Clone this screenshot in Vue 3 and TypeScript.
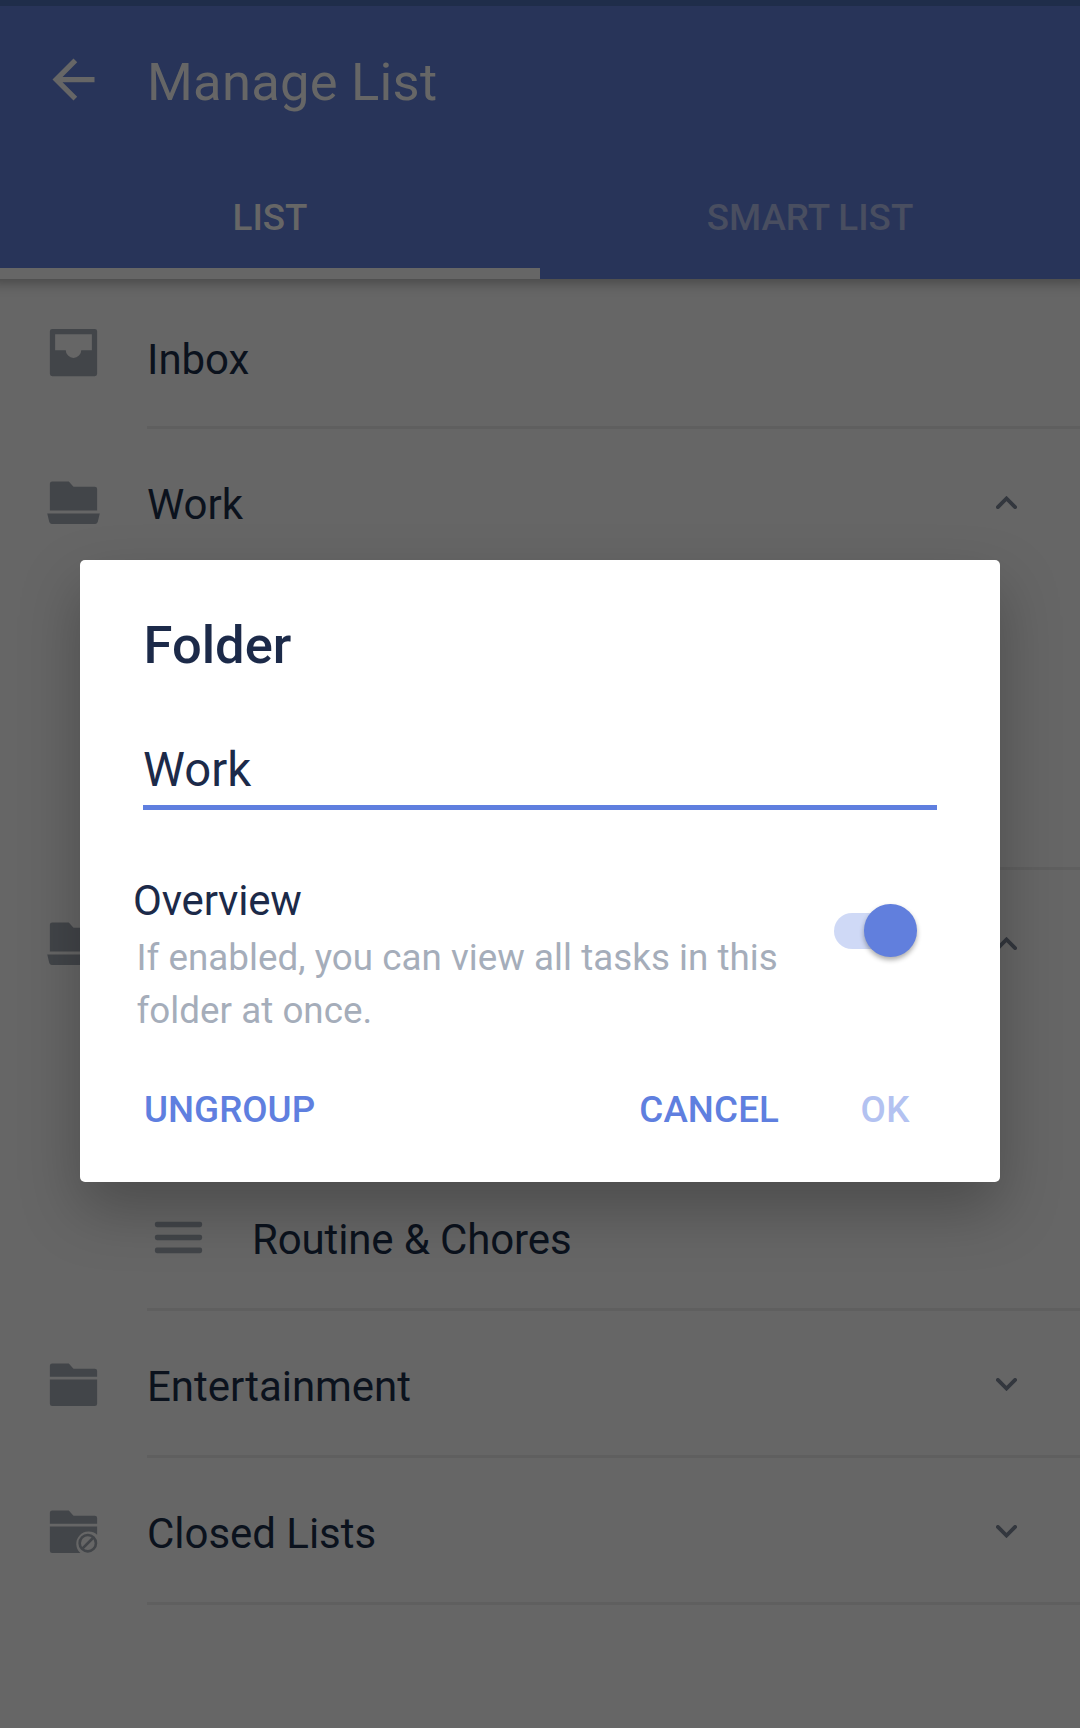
<script setup lang="ts">
import { ref } from 'vue'

type IconName = 'inbox' | 'open' | 'closed' | 'archived' | 'list'

interface Row {
  id: number
  icon?: IconName
  label?: string
  chevron?: 'up' | 'down'
  child?: boolean
  divider?: boolean
}

const rows: Row[] = [
  { id: 1, icon: 'inbox', label: 'Inbox', divider: true },
  { id: 2, icon: 'open', label: 'Work', chevron: 'up' },
  { id: 3, child: true },
  { id: 4, child: true, divider: true },
  { id: 5, icon: 'open', chevron: 'up' },
  { id: 6, child: true },
  { id: 7, icon: 'list', label: 'Routine & Chores', child: true, divider: true },
  { id: 8, icon: 'closed', label: 'Entertainment', chevron: 'down', divider: true },
  { id: 9, icon: 'archived', label: 'Closed Lists', chevron: 'down', divider: true },
]

const folderName = ref('Work')
const overview = ref(true)
</script>

<template>
  <div class="screen">
    <header class="appbar">
      <div class="status"></div>
      <div class="toolbar">
        <svg class="back" viewBox="0 0 24 24">
          <path d="M20 11H7.83l5.59-5.59L12 4l-8 8 8 8 1.41-1.41L7.83 13H20z" />
        </svg>
        <h1>Manage List</h1>
      </div>
      <nav class="tabs">
        <div class="tab active">LIST</div>
        <div class="tab">SMART LIST</div>
      </nav>
    </header>

    <main class="list">
      <div
        v-for="row in rows"
        :key="row.id"
        class="row"
        :class="{ child: row.child, inbox: row.icon === 'inbox' }"
      >
        <svg class="icon" viewBox="0 0 24 24">
          <path
            v-if="row.icon === 'inbox'"
            fill-rule="evenodd"
            d="M3.900 3h16.200a.9.9 0 0 1 .9.9v16.200a.9.9 0 0 1-.9.9H3.900a.9.9 0 0 1-.9-.9V3.900a.9.9 0 0 1 .9-.9zM5 5v6.100h4.050a2.950 2.950 0 0 0 5.900 0H19V5z"
          />
          <template v-else-if="row.icon === 'open'">
            <path d="M3.900 4h6.300L12 6h8.100a.9.9 0 0 1 .9.9V15H3V4.900a.9.9 0 0 1 .9-.9z" />
            <path d="M2 16.150h20l-.75 3.200a1 1 0 0 1-.95.8H3.700a1 1 0 0 1-.95-.8z" />
          </template>
          <template v-else-if="row.icon === 'closed'">
            <path d="M3.900 4h6.300L12 6h8.100a.9.9 0 0 1 .9.9V9H3V4.900a.9.9 0 0 1 .9-.9z" />
            <path d="M3 10.100h18v9.200a.9.9 0 0 1-.9.9H3.900a.9.9 0 0 1-.9-.9z" />
          </template>
          <template v-else-if="row.icon === 'archived'">
            <path d="M3.900 4h6.300L12 6h8.100a.9.9 0 0 1 .9.9V9H3V4.900a.9.9 0 0 1 .9-.9z" />
            <path d="M3 10.100h18v3.100A4.500 4.500 0 0 0 14.600 20.200H3.900a.9.9 0 0 1-.9-.9z" />
            <g class="ban">
              <circle cx="17.450" cy="16.450" r="3.100" />
              <path d="M15.300 18.600l4.300-4.300" />
            </g>
          </template>
          <template v-else-if="row.icon === 'list'">
            <rect x="3" y="4.050" width="18" height="2.100" rx=".8" />
            <rect x="3" y="9" width="18" height="2.100" rx=".8" />
            <rect x="3" y="13.950" width="18" height="2.100" rx=".8" />
          </template>
        </svg>
        <div class="body" :class="{ divider: row.divider }">
          <span class="label">{{ row.label }}</span>
          <svg
            v-if="row.chevron"
            class="chevron"
            :class="row.chevron"
            viewBox="0 0 21 13"
          >
            <path d="M1.900 1.900l8.600 8.600 8.600-8.600" />
          </svg>
        </div>
      </div>
    </main>

    <section class="dialog">
      <h2>Folder</h2>
      <input v-model="folderName" class="field" type="text" />
      <div class="option">
        <div class="option-text">
          <div class="option-title">Overview</div>
          <p>If enabled, you can view all tasks in this folder at once.</p>
        </div>
        <div class="switch" :class="{ on: overview }" @click="overview = !overview">
          <div class="thumb"></div>
        </div>
      </div>
      <div class="actions">
        <button>UNGROUP</button>
        <button class="cancel">CANCEL</button>
        <button class="ok" disabled>OK</button>
      </div>
    </section>
  </div>
</template>

<style>
body {
  margin: 0;
  background: #666;
}
</style>

<style scoped>
.screen {
  position: relative;
  width: 1080px;
  height: 1728px;
  overflow: hidden;
  background: #666;
  font-family: Roboto, "Liberation Sans", sans-serif;
}
h1, h2, p {
  margin: 0;
}
.appbar {
  position: relative;
  z-index: 1;
  height: 279px;
  display: flex;
  flex-direction: column;
  background: #283459;
  box-shadow: 0 -8px 12px 12px rgba(0, 0, 0, .3);
}
.status {
  height: 6px;
  background: #1f2d4a;
}
.toolbar {
  display: flex;
  height: 147px;
}
.back {
  width: 63px;
  height: 63px;
  margin: 42px 42px 0;
  fill: #666;
}
h1 {
  margin-top: 45px;
  font-size: 52.5px;
  line-height: 62px;
  font-weight: 400;
  letter-spacing: .25px;
  color: #666;
}
.tabs {
  flex: 1;
  display: flex;
}
.tab {
  flex: 1;
  box-sizing: border-box;
  padding-top: 43px;
  text-align: center;
  font-size: 36.75px;
  line-height: 43px;
  font-weight: 500;
  color: #494e60;
}
.tab.active {
  color: #666;
  border-bottom: 11px solid #666;
}
.list {
  margin-top: 3px;
}
.row {
  display: flex;
  height: 147px;
}
.icon {
  flex: none;
  width: 63px;
  height: 63px;
  margin: 41.5px 42px 0;
  fill: #424549;
}
.inbox .icon {
  margin-top: 39px;
}
.ban {
  fill: none;
  stroke: #424549;
  stroke-width: 1;
}
.body {
  flex: 1;
  display: flex;
  justify-content: space-between;
  box-sizing: border-box;
}
.divider {
  border-bottom: 3px solid #5f5f5f;
}
.label {
  margin-top: 51px;
  font-size: 42px;
  line-height: 50px;
  letter-spacing: -.03px;
  color: #0b121d;
}
.inbox .label {
  margin-top: 53px;
}
.child .icon {
  margin: 47px 0 0 147px;
}
.child .body {
  position: relative;
  padding-left: 42px;
}
.child .label {
  letter-spacing: -.13px;
}
.child .divider {
  border-bottom: 0;
}
.child .divider::after {
  content: "";
  position: absolute;
  left: -63px;
  right: 0;
  bottom: 0;
  height: 3px;
  background: #5f5f5f;
}
.chevron {
  width: 21px;
  height: 13px;
  margin: 67px 63px 0 0;
  fill: none;
  stroke: #33373e;
  stroke-width: 3.8;
  stroke-linecap: round;
}
.chevron.up {
  transform: scaleY(-1);
}
.dialog {
  position: absolute;
  z-index: 2;
  left: 80px;
  top: 560px;
  width: 919.5px;
  height: 622px;
  box-sizing: border-box;
  padding-top: 54px;
  border-radius: 5px;
  background: #fff;
  box-shadow: 0 27px 60px rgba(0, 0, 0, .26);
}
h2 {
  margin-left: 63.5px;
  font-size: 52.5px;
  line-height: 62px;
  font-weight: 500;
  color: #1c2a49;
}
.field {
  display: block;
  box-sizing: border-box;
  width: 794px;
  height: 68px;
  margin: 66px 0 0 63px;
  padding: 0 0 7px;
  border: 0;
  border-bottom: 5px solid #5f7fdf;
  outline: 0;
  background: none;
  font: 400 47.25px/56px Roboto, "Liberation Sans", sans-serif;
  color: #1c2a49;
}
.option {
  display: flex;
  justify-content: space-between;
  margin: 66px 83px 0 53px;
}
.option-title {
  font-size: 42px;
  line-height: 49px;
  letter-spacing: -.2px;
  color: #1c2a49;
}
.option p {
  width: 660px;
  margin: 6px 0 0 3.5px;
  font-size: 36.75px;
  line-height: 53px;
  letter-spacing: .03px;
  color: #a5adba;
}
.switch {
  flex: none;
  display: flex;
  align-items: center;
  width: 82.5px;
  height: 36px;
  margin-top: 36.5px;
  border-radius: 18px;
  background: linear-gradient(#cfd9f6, #cfd9f6) no-repeat 0 0 / 60px 100%;
}
.switch.on {
  justify-content: flex-end;
}
.thumb {
  flex: none;
  width: 52.5px;
  height: 52.5px;
  border-radius: 50%;
  background: #617fdd;
  box-shadow: 0 3px 5px rgba(0, 0, 0, .32);
}
.actions {
  display: flex;
  margin: 51px 0 0 64px;
}
button {
  padding: 0;
  border: 0;
  background: none;
  font: 500 36.75px/43px Roboto, "Liberation Sans", sans-serif;
  color: #5f7fdf;
}
.cancel {
  margin: 0 81.5px 0 auto;
  letter-spacing: .1px;
}
.ok {
  margin-right: 89.5px;
  letter-spacing: .5px;
  color: #b3c2f1;
}
</style>
